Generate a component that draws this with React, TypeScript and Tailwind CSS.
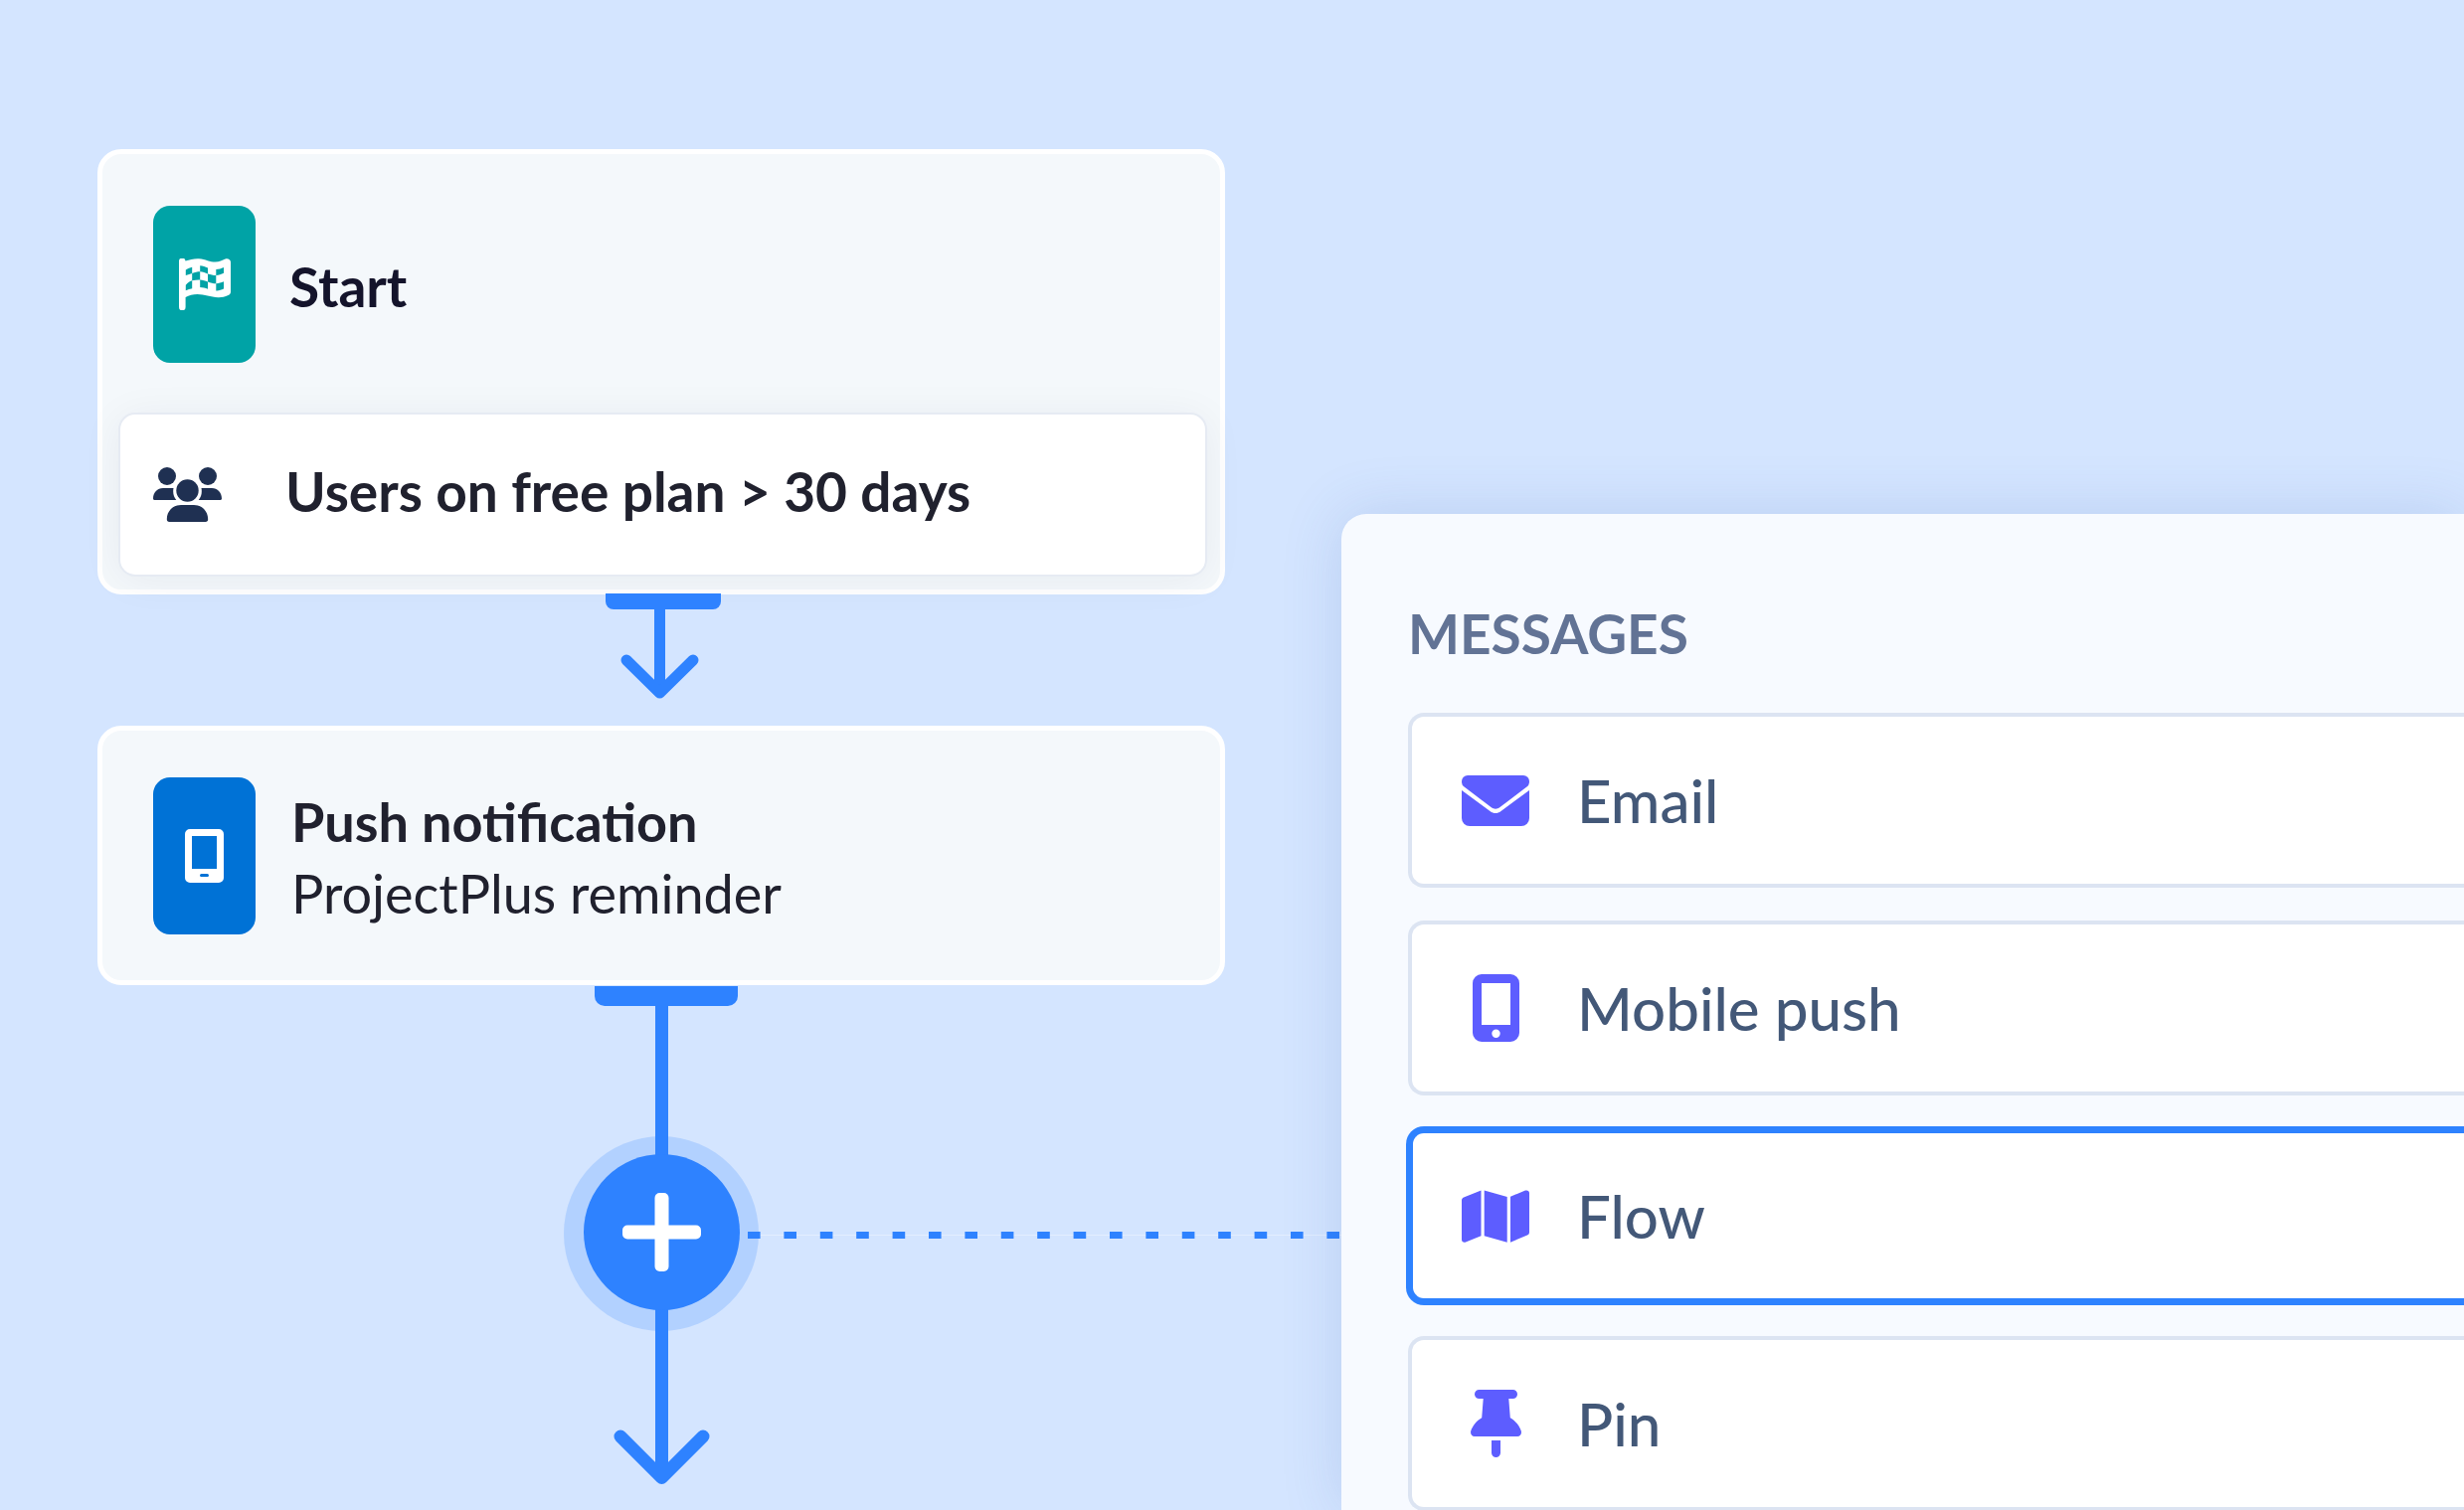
import type { ReactNode } from "react";

interface IconProperties {
    className?: string;
}

function FlagIcon({ className }: IconProperties) {
    return (
        <svg viewBox="0 0 52 52" className={className} fill="currentColor" fillRule="evenodd" aria-hidden="true">
            <path d="M0 3.2A3.2 3.2 0 0 1 6.5 2.6C11 1 15 0 20 .2 27 .8 31 3.6 36.5 3.6 40.5 3.6 43.5 1.8 46.6.5 49-.4 52 .9 52 3.8V33.5C52 35.5 51 36.5 49.5 37 46 38.5 43 39.3 39.5 39.2 31.500 39 26 36 18.500 36 14 36 10.200 37.200 6.600 39V49A3.300 3.300 0 0 1 0 49ZM6.800 11.400V17C9.200 16.200 11 15.400 13.200 14.900V8.800C11 9.400 9.200 10.300 6.800 11.400ZM21.200 7.200V13.300C24 13.500 26.500 14.600 29 15.400V9.600C26.500 8.500 24 7.400 21.200 7.200ZM13.200 14.900V22.200C16 21.600 18.500 21.300 21.200 21.400V13.300C18.500 13.300 16 14 13.200 14.900ZM29 15.400V23.400C31.700 24.400 34.400 25.200 37.300 25.200V17C34.400 16.900 31.700 16.300 29 15.400ZM37.300 17C40 16.900 42.500 15.800 45 14.700V8.900C42.500 9.900 40 10.900 37.300 10.900ZM6.800 26.800V32.300C9 31.400 11 30.600 13.200 30.200V22.200C11 22.800 9 23.900 6.800 26.800ZM21.200 21.400V29C24 29.200 26.500 29.900 29 30.700V23.400C26.500 22.400 24 21.600 21.200 21.400ZM37.300 25.200V32.400C40 32.600 42.500 31.600 45 30.600V23.300C42.500 24.200 40 25.200 37.300 25.200Z" />
        </svg>
    );
}

function UsersIcon({ className }: IconProperties) {
    return (
        <svg viewBox="0 0 69 55" className={className} fill="currentColor" aria-hidden="true">
            <circle cx="14" cy="9" r="9" />
            <circle cx="55" cy="9" r="9" />
            <circle cx="34.5" cy="23.5" r="11.2" />
            <path d="M10 21H20.5C19.6 25.5 20.6 29.8 23.3 33H1.5C.6 33 0 32.4 0 31.5 0 25.5 4.3 21 10 21ZM48.5 21H59C64.7 21 69 25.5 69 31.5 69 32.4 68.4 33 67.5 33H45.7C48.4 29.8 49.4 25.5 48.5 21ZM28 38H41C49 38 55.2 44 55.2 52.3 55.2 54 54.3 55 52.7 55H16.3C14.7 55 13.8 54 13.8 52.3 13.8 44 20 38 28 38Z" />
        </svg>
    );
}

function TabletIcon({ className }: IconProperties) {
    return (
        <svg viewBox="0 0 39 54" className={className} fill="currentColor" fillRule="evenodd" aria-hidden="true">
            <path d="M5 0H34A5 5 0 0 1 39 5V49A5 5 0 0 1 34 54H5A5 5 0 0 1 0 49V5A5 5 0 0 1 5 0ZM7 7V40H32V7ZM16.5 45A1.5 1.5 0 0 0 16.5 48H22.5A1.5 1.5 0 0 0 22.5 45Z" />
        </svg>
    );
}

function EnvelopeIcon() {
    return (
        <svg viewBox="0 0 68 51" className="w-17" fill="currentColor" aria-hidden="true">
            <path d="M6 0H62A6 6 0 0 1 68 6C68 8.6 67.2 10.3 65.5 11.6L38.5 32C35.5 34.2 32.5 34.2 29.5 32L2.5 11.6C.8 10.3 0 8.6 0 6A6 6 0 0 1 6 0Z" />
            <path d="M0 15 28.5 36C32.2 38.7 35.8 38.7 39.5 36L68 15V43A8 8 0 0 1 60 51H8A8 8 0 0 1 0 43Z" />
        </svg>
    );
}

function PhoneIcon() {
    return (
        <svg viewBox="0 0 47 68" className="h-17" fill="currentColor" fillRule="evenodd" aria-hidden="true">
            <path d="M9 0H38A9 9 0 0 1 47 9V59A9 9 0 0 1 38 68H9A9 9 0 0 1 0 59V9A9 9 0 0 1 9 0ZM9 9V51H38V9ZM23.5 55.5A4.2 4.2 0 0 0 23.5 63.9 4.2 4.2 0 0 0 23.5 55.5Z" />
        </svg>
    );
}

function MapIcon() {
    return (
        <svg viewBox="0 0 68 53" className="w-17" fill="currentColor" aria-hidden="true">
            <path d="M19.5.5V46.3L4 52.5C2 53.2 0 52.2 0 50V10.5C0 9 .8 8 2 7.5ZM22.7.5 45.7 7V52.7L22.7 46.3ZM49 6.7 64 .6C66 0 68 .8 68 3V42.5C68 44 67.3 45 66 45.5L49 52.7Z" />
        </svg>
    );
}

function PinIcon() {
    return (
        <svg viewBox="0 0 51 68" className="h-17" fill="currentColor" aria-hidden="true">
            <path d="M8.5 0H42.5A4.5 4.5 0 0 1 42.5 9H38.3L39.8 28.2C45 31.3 49 36 50.8 41.6 51.5 44.5 50 47 47 47H4C1 47-.5 44.5.2 41.6 2 36 6 31.3 11.2 28.2L12.7 9H8.5A4.5 4.5 0 0 1 8.5 0ZM21 51H30V63.5A4.5 4.5 0 0 1 21 63.5Z" />
        </svg>
    );
}

const messages = [
    { label: "Email", icon: <EnvelopeIcon />, active: false },
    { label: "Mobile push", icon: <PhoneIcon />, active: false },
    { label: "Flow", icon: <MapIcon />, active: true },
    { label: "Pin", icon: <PinIcon />, active: false },
];

function NodeIcon({ className, children }: { className: string; children: ReactNode }) {
    return <div className={`grid h-[158px] w-[103px] shrink-0 place-items-center rounded-[17px] text-white ${className}`}>{children}</div>;
}

function StartNode() {
    return (
        <article className="rounded-3xl border-[5px] border-white bg-[#f4f8fb] pt-[52px] pr-[13px] pb-[13px] pl-4">
            <div className="flex items-center gap-[34px] pl-[35px]">
                <NodeIcon className="bg-[#00a3a6]">
                    <FlagIcon className="w-[52px]" />
                </NodeIcon>
                <h2 className="pt-1 text-[55px] leading-[72px] font-bold text-[#14142b]">Start</h2>
            </div>
            <div className="mt-[50px] flex h-[165px] items-center gap-16 rounded-[17px] border-2 border-[#e6ebf3] bg-white pl-[33px] shadow-[0_4px_40px_rgba(20,30,60,0.06)]">
                <UsersIcon className="w-[69px] shrink-0 text-[#1f3052]" />
                <p className="pb-2 text-[55px] leading-[72px] font-bold whitespace-nowrap text-[#20212e]">Users on free plan &gt; 30 days</p>
            </div>
        </article>
    );
}

function PushNode() {
    return (
        <article className="flex items-center gap-9 rounded-3xl border-[5px] border-white bg-[#f4f8fb] pt-[47px] pb-[46px] pl-[51px]">
            <NodeIcon className="bg-[#0072d6]">
                <TabletIcon className="w-[39px]" />
            </NodeIcon>
            <div className="pt-1 text-[54px] leading-[72px] whitespace-nowrap text-[#20212e]">
                <h2 className="font-bold">Push notification</h2>
                <p>ProjectPlus reminder</p>
            </div>
        </article>
    );
}

function ArrowConnector() {
    return (
        <svg viewBox="0 0 160 133" className="mx-auto -mt-px h-[133px] w-40" fill="none" stroke="#2e82ff" aria-hidden="true">
            <path d="M24 0H140V8A8 8 0 0 1 132 16H32A8 8 0 0 1 24 8Z" fill="#2e82ff" stroke="none" />
            <path d="M78.5 0V99" strokeWidth="11" />
            <path d="M45 67 78.5 100 112 67" strokeWidth="11" strokeLinecap="round" strokeLinejoin="round" />
        </svg>
    );
}

function AddStep() {
    return (
        <div className="relative grid justify-items-center">
            <svg viewBox="0 0 196 528" className="h-[528px] w-[196px] [grid-area:1/1]" fill="none" stroke="#2e82ff" aria-hidden="true">
                <circle cx="98" cy="250" r="98" fill="#2e82ff" fillOpacity="0.2" stroke="none" />
                <path d="M31 1H175V11A10 10 0 0 1 165 21H41A10 10 0 0 1 31 11Z" fill="#2e82ff" stroke="none" />
                <path d="M98.500 1V492" strokeWidth="13" />
                <path d="M57 454 98.500 495.500 140 454" strokeWidth="13" strokeLinecap="round" strokeLinejoin="round" />
            </svg>
            <svg className="absolute top-[248px] left-[calc(50%+87px)] h-[7px] w-[calc(50%+30px)]" aria-hidden="true">
                <path d="M0 3.5H900" stroke="#e3eeff" />
                <path d="M0 3.5H900" stroke="#2e82ff" strokeWidth="7" strokeDasharray="12.6 23.8" />
            </svg>
            <button type="button" aria-label="Add step" className="z-10 mt-[170px] grid size-[157px] place-items-center rounded-full bg-[#2e82ff] [grid-area:1/1]">
                <svg viewBox="0 0 79 79" className="size-[79px]" fill="#fff" aria-hidden="true">
                    <rect x="32.5" y="0" width="14" height="79" rx="5" />
                    <rect x="0" y="32.5" width="79" height="14" rx="5" />
                </svg>
            </button>
        </div>
    );
}

export default function App() {
    return (
        <main className="grid h-screen grid-cols-[1349fr_1129fr] overflow-hidden bg-[#d4e5ff] font-['Lato',sans-serif]">
            <section className="min-w-0 pt-[150px] pr-[117px] pl-[98px]">
                <StartNode />
                <ArrowConnector />
                <PushNode />
                <AddStep />
            </section>
            <aside className="z-10 mt-[517px] min-w-0 rounded-tl-[25px] bg-[#f7faff] pt-[84px] pl-[67px] shadow-[0_0_60px_rgba(60,100,180,0.18)]">
                <h2 className="text-[55px] leading-[72px] font-bold text-[#627395]">MESSAGES</h2>
                <ul className="mt-11 flex flex-col gap-[33px]">
                    {messages.map((message) => (
                        <li key={message.label}>
                            <button
                                type="button"
                                className={`flex h-44 w-full items-center gap-12 rounded-l-2xl border-r-0 bg-white text-[#435878] ${message.active ? "border-[5px] border-[#2e82ff] pl-[49px] ring-2 ring-[#2e82ff]" : "border-4 border-[#dce4f2] pl-[50px]"}`}
                            >
                                <span className="grid w-17 place-items-center text-[#5d5dff]">{message.icon}</span>
                                <span className="text-[60px] leading-[80px] font-medium">{message.label}</span>
                            </button>
                        </li>
                    ))}
                </ul>
            </aside>
        </main>
    );
}
